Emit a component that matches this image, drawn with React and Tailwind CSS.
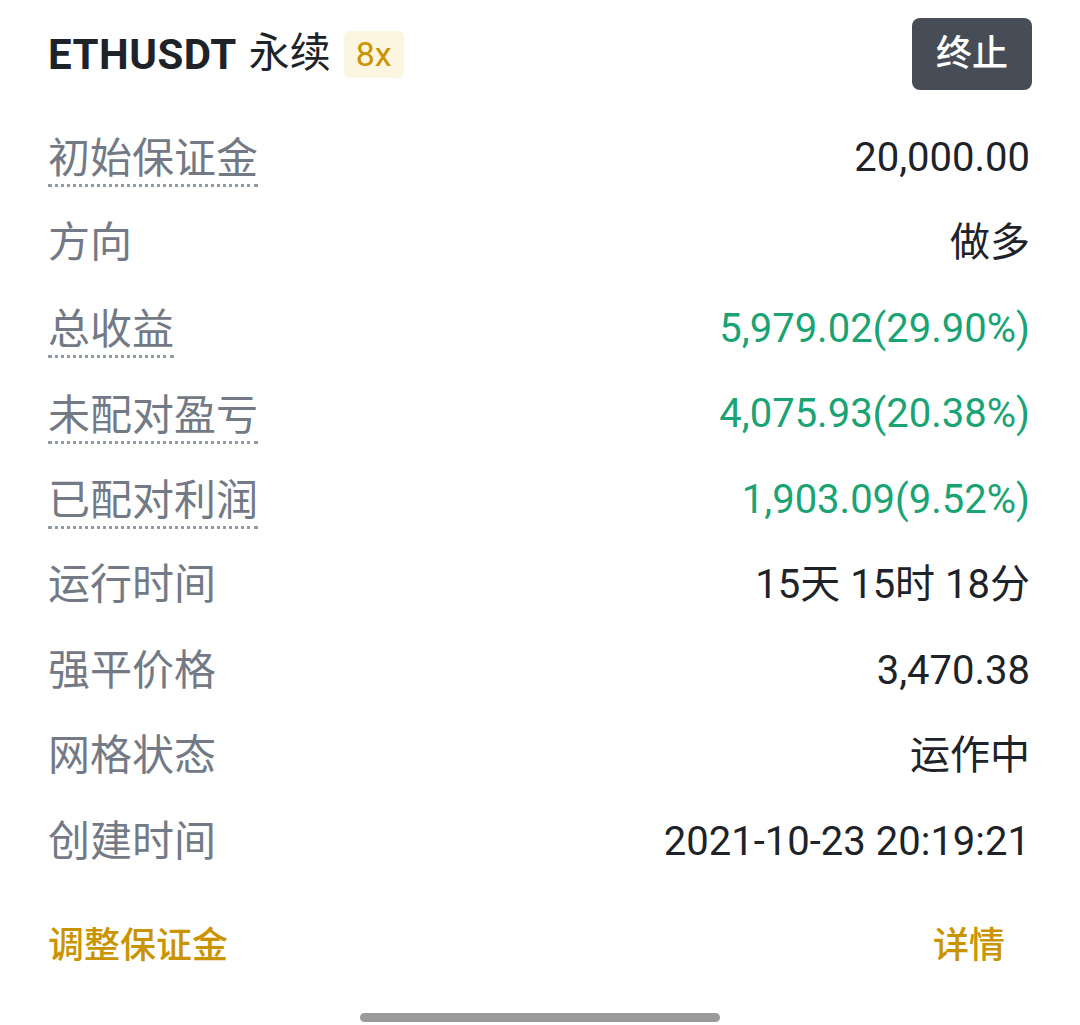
// ========================== IMPORTS ==========================
import React from "react";

// ========================== DATA ==========================
const rows = [
  { label: "初始保证金", value: "20,000.00", dotted: true },
  { label: "方向", value: "做多" },
  { label: "总收益", value: "5,979.02(29.90%)", dotted: true, green: true },
  { label: "未配对盈亏", value: "4,075.93(20.38%)", dotted: true, green: true },
  { label: "已配对利润", value: "1,903.09(9.52%)", dotted: true, green: true },
  { label: "运行时间", value: "15天 15时 18分" },
  { label: "强平价格", value: "3,470.38" },
  { label: "网格状态", value: "运作中" },
  { label: "创建时间", value: "2021-10-23 20:19:21" },
];

const FONT = "font-['Roboto','Noto_Sans_CJK_SC',sans-serif]";

// ========================== COMPONENT ==========================
const App = () => {
  return (
    <div className={`w-[1080px] h-[1025px] bg-white overflow-hidden flex flex-col ${FONT}`}>
      {/* ================= HEADER ================= */}
      <div className="flex items-center justify-between pl-[48px] pr-[48px] pt-[18px] h-[90px] shrink-0">
        <div className="flex items-center">
          <span className="text-[42px] font-bold text-[#1e2329] tracking-[0.5px]">ETHUSDT</span>
          <span className="text-[41px] text-[#1e2329] ml-[12px]">永续</span>
          <span className="ml-[13px] w-[60px] h-[47px] rounded-[6px] bg-[#fcf5df] text-[#c99400] text-[34px] flex items-center justify-center">
            8x
          </span>
        </div>
        <button className="w-[120px] h-[72px] rounded-[8px] bg-[#474d57] text-white text-[36px] font-medium flex items-center justify-center">
          终止
        </button>
      </div>

      {/* ================= ROWS ================= */}
      <div className="flex flex-col pl-[48px] pr-[50px] mt-[25px]">
        {rows.map((row) => (
          <div key={row.label} className="h-[85.5px] flex items-center justify-between">
            <span
              className={`text-[42px] text-[#737a86] leading-[46px] ${
                row.dotted ? "border-b-[3px] border-dotted border-[#929aa5] pb-[2px] mt-[8px]" : ""
              }`}
            >
              {row.label}
            </span>
            <span className={`text-[40px] ${row.green ? "text-[#1aa374]" : "text-[#1e2329]"}`}>
              {row.value}
            </span>
          </div>
        ))}
      </div>

      {/* ================= FOOTER ================= */}
      <div className="h-[122px] flex items-center justify-between pl-[48px] pr-[75px]">
        <span className="text-[36px] font-medium text-[#c99400]">调整保证金</span>
        <span className="text-[36px] font-medium text-[#c99400]">详情</span>
      </div>

      {/* ================= HOME INDICATOR ================= */}
      <div className="flex justify-center mt-[6px]">
        <div className="w-[360px] h-[9px] rounded-full bg-[#9a9a9a]" />
      </div>
    </div>
  );
};

// ========================== EXPORT ==========================
export default App;
